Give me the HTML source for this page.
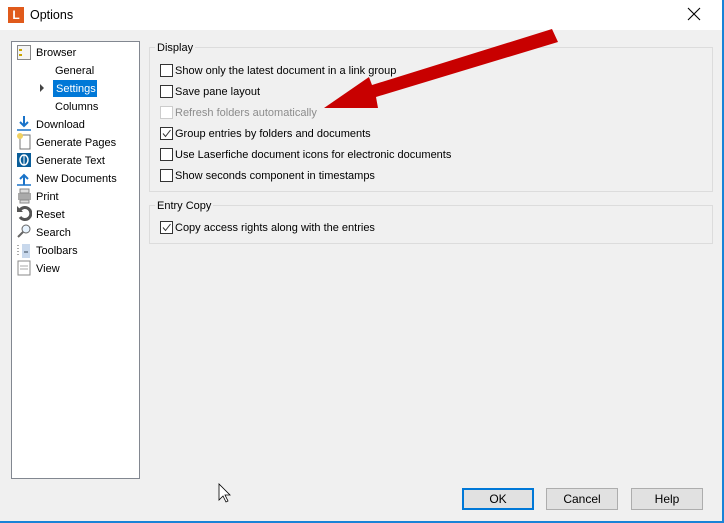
<!DOCTYPE html>
<html><head><style>
*{margin:0;padding:0;box-sizing:border-box}
body{width:724px;height:523px;position:relative;overflow:hidden;background:#f0f0f0;font-family:"Liberation Sans",sans-serif;font-size:11px;color:#000}
.a{position:absolute;white-space:nowrap}
.t{margin-top:1px}
.cb{position:absolute;width:13px;height:13px;border:1px solid #333;background:#fff}
.cb.d{border-color:#ccc}
.btn{position:absolute;width:72px;height:22px;border:1px solid #adadad;background:#e1e1e1;text-align:center;line-height:20px;font-size:12px}
</style></head><body>
<div class="a" style="left:0;top:0;width:724px;height:30px;background:#fff"></div>
<div class="a" style="left:8px;top:7px;width:16px;height:16px;background:#e05a1b;color:#fff;font-weight:bold;font-size:12px;text-align:center;line-height:16px">L</div>
<div class="a" style="left:30px;top:8px;font-size:12.5px">Options</div>
<svg class="a" style="left:687px;top:7px" width="14" height="14"><path d="M1 1L13 13M13 1L1 13" stroke="#000" stroke-width="1.1"/></svg>
<div class="a" style="left:722px;top:0;width:2px;height:523px;background:#1883d7"></div>
<div class="a" style="left:0;top:521px;width:724px;height:2px;background:#1883d7"></div>

<div class="a" style="left:11px;top:41px;width:129px;height:438px;background:#fff;border:1px solid #828790"></div>
<div class="a" style="left:36px;top:47px">Browser</div>
<div class="a" style="left:55px;top:65px">General</div>
<svg class="a" style="left:40px;top:84px" width="5" height="8"><path d="M0 0L4 4L0 8Z" fill="#444"/></svg>
<div class="a" style="left:53px;top:80px;width:44px;height:17px;background:#0078d7"></div>
<div class="a" style="left:56px;top:83px;color:#fff">Settings</div>
<div class="a" style="left:55px;top:101px">Columns</div>
<div class="a" style="left:36px;top:119px">Download</div>
<div class="a" style="left:36px;top:137px">Generate Pages</div>
<div class="a" style="left:36px;top:155px">Generate Text</div>
<div class="a" style="left:36px;top:173px">New Documents</div>
<div class="a" style="left:36px;top:191px">Print</div>
<div class="a" style="left:36px;top:209px">Reset</div>
<div class="a" style="left:36px;top:227px">Search</div>
<div class="a" style="left:36px;top:245px">Toolbars</div>
<div class="a" style="left:36px;top:263px">View</div>
<svg class="a" style="left:16px;top:44px" width="16" height="240">
<rect x="1.5" y="1.5" width="13" height="14" fill="#f4f4f4" stroke="#888"/><rect x="3" y="5" width="3" height="2" fill="#c9a400"/><rect x="3" y="10" width="3" height="2" fill="#c9a400"/>
<path d="M8 72v10M4 78l4 4 4-4" stroke="#1a73c9" stroke-width="2" fill="none"/><path d="M1 86h14" stroke="#1a73c9" stroke-width="1.5"/>
<rect x="4" y="91" width="10" height="14" fill="#fff" stroke="#777"/><circle cx="4" cy="92" r="3" fill="#f0d060"/>
<rect x="1" y="109" width="14" height="14" fill="#0a5e9a"/><ellipse cx="8" cy="116" rx="4" ry="5" fill="none" stroke="#fff" stroke-width="1.5"/><path d="M8 111v10" stroke="#fff"/>
<path d="M8 141v-10M4 135l4-4 4 4" stroke="#1a73c9" stroke-width="2" fill="none"/><path d="M1 141h14" stroke="#1a73c9" stroke-width="1.5"/>
<rect x="2" y="149" width="13" height="7" fill="#aaa"/><rect x="4" y="145" width="9" height="4" fill="#ddd" stroke="#888"/><rect x="4" y="156" width="9" height="3" fill="#ddd" stroke="#888"/>
<path d="M4 166a6 6 0 1 1 0 7" stroke="#555" stroke-width="3" fill="none"/><path d="M1 162v6h6z" fill="#555"/>
<circle cx="10" cy="185" r="4" fill="#e8f4ff" stroke="#666"/><path d="M7 188l-5 5" stroke="#666" stroke-width="2"/>
<path d="M2 201v12" stroke="#555" stroke-dasharray="1 2"/><rect x="6" y="200" width="8" height="14" fill="#c8d8ec"/><path d="M8 208h4" stroke="#345"/>
<rect x="2" y="217" width="12" height="14" fill="#fff" stroke="#888"/><path d="M4 222h8M4 225h8" stroke="#aaa"/>
</svg>

<div class="a" style="left:149px;top:47px;width:564px;height:145px;border:1px solid #dcdcdc"></div>
<div class="a" style="left:155px;top:42px;background:#f0f0f0;padding:0 2px">Display</div>
<div class="cb" style="left:160px;top:64px"></div><div class="a" style="left:175px;top:65px">Show only the latest document in a link group</div>
<div class="cb" style="left:160px;top:85px"></div><div class="a" style="left:175px;top:86px">Save pane layout</div>
<div class="cb d" style="left:160px;top:106px"></div><div class="a" style="left:175px;top:107px;color:#8c8c8c">Refresh folders automatically</div>
<div class="cb" style="left:160px;top:127px"></div><svg class="a" style="left:161px;top:128px" width="11" height="11"><path d="M2 5.5l2.5 3L9.5 2" stroke="#333" fill="none"/></svg><div class="a" style="left:175px;top:128px">Group entries by folders and documents</div>
<div class="cb" style="left:160px;top:148px"></div><div class="a" style="left:175px;top:149px">Use Laserfiche document icons for electronic documents</div>
<div class="cb" style="left:160px;top:169px"></div><div class="a" style="left:175px;top:170px">Show seconds component in timestamps</div>

<div class="a" style="left:149px;top:205px;width:564px;height:39px;border:1px solid #dcdcdc"></div>
<div class="a" style="left:155px;top:200px;background:#f0f0f0;padding:0 2px">Entry Copy</div>
<div class="cb" style="left:160px;top:221px"></div><svg class="a" style="left:161px;top:222px" width="11" height="11"><path d="M2 5.5l2.5 3L9.5 2" stroke="#333" fill="none"/></svg><div class="a" style="left:175px;top:222px">Copy access rights along with the entries</div>

<svg class="a" style="left:0;top:0" width="724" height="523">
<path d="M552 29L558 42L376 97L378 108L324 108L369 77L372 85Z" fill="#c80000"/>
<path d="M219 484v16l4-4 3 6 2-1-3-6h5z" fill="#fff" stroke="#000" stroke-width="0.8"/>
</svg>

<div class="btn" style="left:462px;top:488px;border:2px solid #0078d7;line-height:18px">OK</div>
<div class="btn" style="left:546px;top:488px">Cancel</div>
<div class="btn" style="left:631px;top:488px">Help</div>
</body></html>
